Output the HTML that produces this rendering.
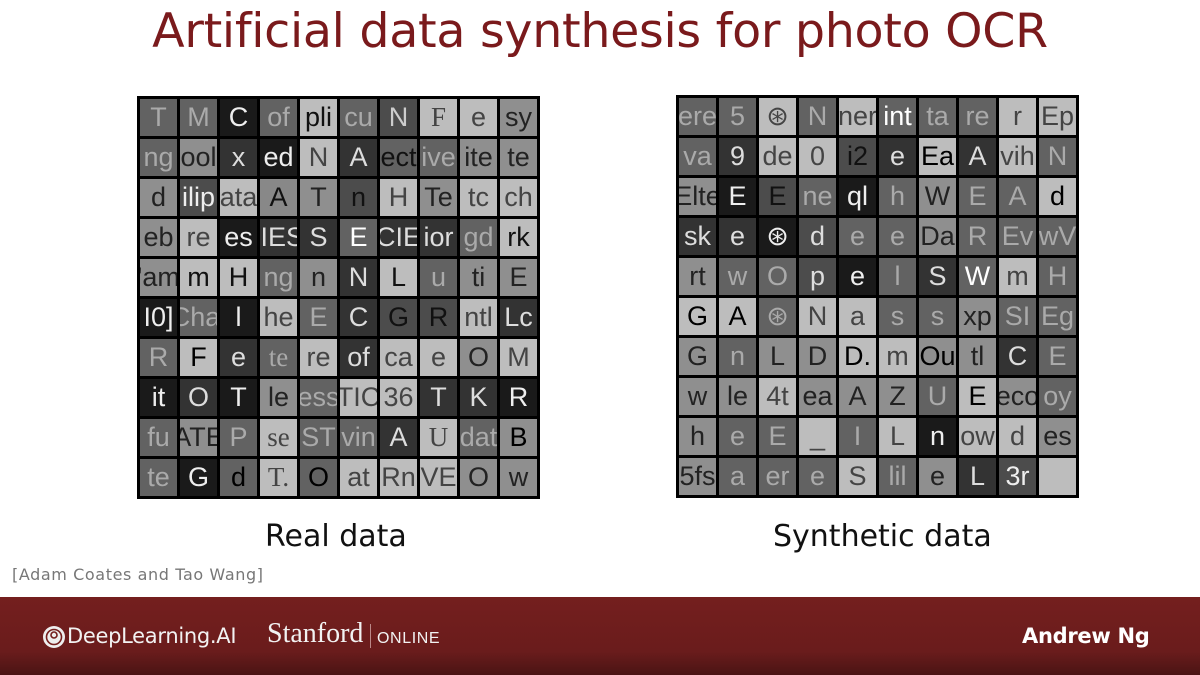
<!DOCTYPE html>
<html><head><meta charset="utf-8"><style>
body{margin:0;width:1200px;height:675px;overflow:hidden;background:#fff;font-family:"DejaVu Sans","Liberation Sans",sans-serif;position:relative}
.t{position:absolute;top:4px;left:0;width:1200px;text-align:center;color:#7a1a1c;font-size:47.5px;letter-spacing:-0.3px}
.g{position:absolute;width:403px;height:403px;background:#000;display:grid;grid-template-columns:repeat(10,1fr);grid-template-rows:repeat(10,1fr);gap:3px;padding:3px;box-sizing:border-box}
.g span{display:flex;align-items:center;justify-content:center;overflow:hidden;font-size:27px;font-family:"Liberation Sans",sans-serif;white-space:nowrap;line-height:1}
.a{background:#626262;color:#aaa}.b{background:#333;color:#ddd}.c{background:#8f8f8f;color:#222}.d{background:#1a1a1a;color:#eee}.e{background:#bdbdbd;color:#444}.f{background:#4c4c4c;color:#111}
.s{font-family:"Liberation Serif",serif!important}
.lab{position:absolute;top:519px;font-size:30px;color:#111}
.ft{position:absolute;left:0;top:597px;width:1200px;height:78px;background:linear-gradient(#741f1e,#6a1c1c 70%,#4a1414)}
</style></head><body>
<div class="t">Artificial data synthesis for photo OCR</div>
<div class="g" style="left:137px;top:96px">
<span class="a">T</span><span class="a">M</span><span class="d">C</span><span class="a">of</span><span class="e" style="color:#111">pli</span><span class="a">cu</span><span class="f" style="color:#ccc">N</span><span class="e s">F</span><span class="e">e</span><span class="c">sy</span>
<span class="a">ng</span><span class="c">ool</span><span class="b">x</span><span class="d">ed</span><span class="e">N</span><span class="b">A</span><span class="a" style="color:#111">ect</span><span class="a">ive</span><span class="c">ite</span><span class="c">te</span>
<span class="c">d</span><span class="f" style="color:#eee">ilip</span><span class="e">ata</span><span class="b" style="color:#111;background:#888">A</span><span class="c">T</span><span class="f">n</span><span class="e">H</span><span class="c">Te</span><span class="e">tc</span><span class="e">ch</span>
<span class="c">eb</span><span class="e">re</span><span class="d">es</span><span class="b">IIES</span><span class="b">S</span><span class="a" style="color:#fff">E</span><span class="b">CIE</span><span class="b">ior</span><span class="a">gd</span><span class="e" style="color:#111">rk</span>
<span class="c">'am</span><span class="e" style="color:#111">m</span><span class="e" style="color:#111">H</span><span class="a">ng</span><span class="c">n</span><span class="b">N</span><span class="e" style="color:#111">L</span><span class="a">u</span><span class="c">ti</span><span class="c">E</span>
<span class="d">I0]</span><span class="a">Chal</span><span class="d">l</span><span class="e">he</span><span class="a">E</span><span class="b">C</span><span class="f">G</span><span class="f">R</span><span class="e">ntl</span><span class="b">Lc</span>
<span class="a">R</span><span class="e" style="color:#000">F</span><span class="b">e</span><span class="a s">te</span><span class="e">re</span><span class="b">of</span><span class="e">ca</span><span class="e">e</span><span class="c">O</span><span class="e">M</span>
<span class="d">it</span><span class="b">O</span><span class="d">T</span><span class="c">le</span><span class="a">ess</span><span class="e">TIC</span><span class="e">36</span><span class="b">T</span><span class="b">K</span><span class="d">R</span>
<span class="a">fu</span><span class="c">ATE</span><span class="a">P</span><span class="e s">se</span><span class="a">ST</span><span class="a">vin</span><span class="b">A</span><span class="e s">U</span><span class="a">dat</span><span class="c" style="color:#000">B</span>
<span class="a">te</span><span class="d">G</span><span class="a" style="color:#000">d</span><span class="e s">T.</span><span class="a" style="color:#000">O</span><span class="e">at</span><span class="e">Rn</span><span class="e">VE</span><span class="c">O</span><span class="c">w</span>
</div>
<div class="g" style="left:676px;top:95px">
<span class="a">ere</span><span class="a">5</span><span class="e">⊛</span><span class="a">N</span><span class="e">ner</span><span class="a" style="color:#fff">int</span><span class="a">ta</span><span class="a">re</span><span class="e">r</span><span class="e">Ep</span>
<span class="a">va</span><span class="b">9</span><span class="e">de</span><span class="e">0</span><span class="f">i2</span><span class="b">e</span><span class="e" style="color:#000">Ea</span><span class="b">A</span><span class="e">vih</span><span class="a">N</span>
<span class="c">Elte</span><span class="d">E</span><span class="f">E</span><span class="a">ne</span><span class="d">ql</span><span class="a">h</span><span class="c">W</span><span class="a">E</span><span class="a">A</span><span class="e" style="color:#000">d</span>
<span class="b">sk</span><span class="b">e</span><span class="d">⊛</span><span class="f" style="color:#ddd">d</span><span class="a">e</span><span class="a">e</span><span class="c">Da</span><span class="a">R</span><span class="a">Ev</span><span class="a">wV</span>
<span class="c">rt</span><span class="a">w</span><span class="a">O</span><span class="f" style="color:#ddd">p</span><span class="d">e</span><span class="a">l</span><span class="b">S</span><span class="a" style="color:#fff">W</span><span class="e">m</span><span class="a">H</span>
<span class="e" style="color:#000">G</span><span class="e" style="color:#000">A</span><span class="a">⊛</span><span class="e">N</span><span class="e">a</span><span class="a">s</span><span class="a">s</span><span class="c">xp</span><span class="a">SI</span><span class="a">Eg</span>
<span class="c">G</span><span class="a">n</span><span class="c">L</span><span class="c">D</span><span class="e" style="color:#000">D.</span><span class="e">m</span><span class="c" style="color:#000">Ou</span><span class="c">tl</span><span class="b">C</span><span class="a">E</span>
<span class="c">w</span><span class="c">le</span><span class="e">4t</span><span class="c">ea</span><span class="c">A</span><span class="c">Z</span><span class="a">U</span><span class="e" style="color:#000">E</span><span class="c">eco</span><span class="a">oy</span>
<span class="c">h</span><span class="a">e</span><span class="a">E</span><span class="e">_</span><span class="a">I</span><span class="e">L</span><span class="d">n</span><span class="e">ow</span><span class="e">d</span><span class="c">es</span>
<span class="c">5fs</span><span class="a">a</span><span class="a">er</span><span class="a">e</span><span class="e">S</span><span class="a">lil</span><span class="c">e</span><span class="b">L</span><span class="f" style="color:#eee">3r</span><span class="e"></span>
</div>
<div class="lab" style="left:265px">Real data</div>
<div class="lab" style="left:773px">Synthetic data</div>
<div style="position:absolute;left:12px;top:565px;font-size:16px;color:#777;letter-spacing:0.6px">[Adam Coates and Tao Wang]</div>
<div class="ft">
<svg style="position:absolute;left:42px;top:28px" width="24" height="24" viewBox="0 0 24 24"><circle cx="12" cy="12" r="11" fill="#eee"/><circle cx="12" cy="12" r="7.5" fill="none" stroke="#741f1e" stroke-width="1.6"/><circle cx="12" cy="10" r="3" fill="none" stroke="#741f1e" stroke-width="1.6"/></svg>
<div style="position:absolute;left:67px;top:27px;font-size:21px;color:#f2f2f2;letter-spacing:-0.3px">DeepLearning.AI</div>
<div style="position:absolute;left:267px;top:21px;font-size:28px;color:#f2f2f2;font-family:'Liberation Serif',serif">Stanford</div>
<div style="position:absolute;left:370px;top:27px;width:1px;height:24px;background:#b88"></div>
<div style="position:absolute;left:377px;top:33px;font-size:16px;color:#f2f2f2;font-family:'Liberation Sans',sans-serif;letter-spacing:0.6px">ONLINE</div>
<div style="position:absolute;left:1022px;top:27px;font-size:21px;color:#fff;font-family:'DejaVu Sans',sans-serif;font-weight:bold;letter-spacing:-0.3px">Andrew Ng</div>
</div>
</body></html>
